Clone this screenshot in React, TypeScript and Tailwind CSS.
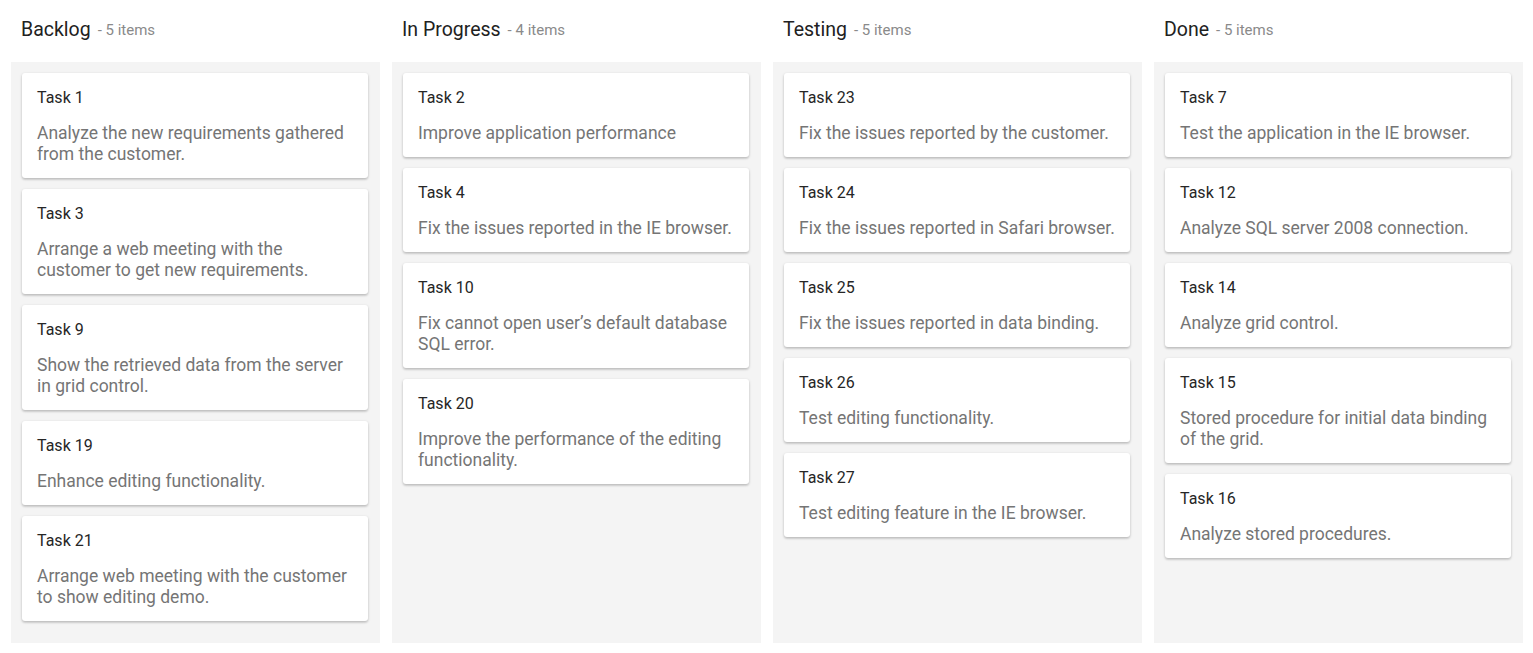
import React from "react";

type Card = { title: string; desc: string };
type Col = { name: string; cards: Card[] };

const cols: Col[] = [
  {
    name: "Backlog",
    cards: [
      { title: "Task 1", desc: "Analyze the new requirements gathered from the customer." },
      { title: "Task 3", desc: "Arrange a web meeting with the customer to get new requirements." },
      { title: "Task 9", desc: "Show the retrieved data from the server in grid control." },
      { title: "Task 19", desc: "Enhance editing functionality." },
      { title: "Task 21", desc: "Arrange web meeting with the customer to show editing demo." },
    ],
  },
  {
    name: "In Progress",
    cards: [
      { title: "Task 2", desc: "Improve application performance" },
      { title: "Task 4", desc: "Fix the issues reported in the IE browser." },
      { title: "Task 10", desc: "Fix cannot open user\u2019s default database SQL error." },
      { title: "Task 20", desc: "Improve the performance of the editing functionality." },
    ],
  },
  {
    name: "Testing",
    cards: [
      { title: "Task 23", desc: "Fix the issues reported by the customer." },
      { title: "Task 24", desc: "Fix the issues reported in Safari browser." },
      { title: "Task 25", desc: "Fix the issues reported in data binding." },
      { title: "Task 26", desc: "Test editing functionality." },
      { title: "Task 27", desc: "Test editing feature in the IE browser." },
    ],
  },
  {
    name: "Done",
    cards: [
      { title: "Task 7", desc: "Test the application in the IE browser." },
      { title: "Task 12", desc: "Analyze SQL server 2008 connection." },
      { title: "Task 14", desc: "Analyze grid control." },
      { title: "Task 15", desc: "Stored procedure for initial data binding of the grid." },
      { title: "Task 16", desc: "Analyze stored procedures." },
    ],
  },
];

export default function App() {
  return (
    <div
      className="w-[1533px] h-[653px] bg-white pl-[11px] pr-[10px] flex gap-[12px]"
      style={{ fontFamily: "Roboto, 'Liberation Sans', sans-serif" }}
    >
      {cols.map((c) => (
        <div key={c.name} className="w-[369px] flex flex-col">
          <div className="h-[62px] flex items-center pl-[10px] pb-[2px]">
            <span className="text-[19.5px] text-[#212121] leading-[24px]">{c.name}</span>
            <span className="text-[15px] text-[#8a8a8a] ml-[7px] leading-[24px]">- {c.cards.length} items</span>
          </div>
          <div className="h-[581px] bg-[#f4f4f4] pt-[11px] pl-[11px] pr-[12px] flex flex-col gap-[11px]">
            {c.cards.map((k) => (
              <div
                key={k.title}
                className="bg-white rounded-[3px] shadow-[0_1px_3px_rgba(0,0,0,0.2),0_2px_2px_rgba(0,0,0,0.08)] pl-[15px] pr-[12px] pt-[15px] pb-[13px]"
              >
                <div className="text-[16px] leading-[20px] text-[#262626]">{k.title}</div>
                <div className="mt-[15px] text-[17.5px] leading-[21px] text-[#757575]">{k.desc}</div>
              </div>
            ))}
          </div>
        </div>
      ))}
    </div>
  );
}
